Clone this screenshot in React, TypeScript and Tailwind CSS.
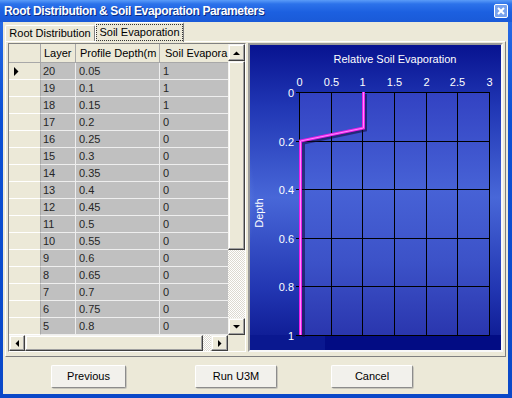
import React from "react";

const rows: [string, string, string][] = [
  ["20", "0.05", "1"], ["19", "0.1", "1"], ["18", "0.15", "1"], ["17", "0.2", "0"],
  ["16", "0.25", "0"], ["15", "0.3", "0"], ["14", "0.35", "0"], ["13", "0.4", "0"],
  ["12", "0.45", "0"], ["11", "0.5", "0"], ["10", "0.55", "0"], ["9", "0.6", "0"],
  ["8", "0.65", "0"], ["7", "0.7", "0"], ["6", "0.75", "0"], ["5", "0.8", "0"],
];

function Arrow({ dir }: { dir: "up" | "down" | "left" | "right" }) {
  const pts =
    dir === "up" ? "0,4 7,4 3.5,0.5" :
    dir === "down" ? "0,0 7,0 3.5,3.5" :
    dir === "left" ? "4,0 4,7 0.5,3.5" : "0,0 0,7 3.5,3.5";
  const w = dir === "up" || dir === "down" ? 7 : 4;
  const h = dir === "up" || dir === "down" ? 4 : 7;
  return (
    <svg width={w} height={h} viewBox={`0 0 ${w} ${h}`}>
      <polygon points={pts} fill="#000" />
    </svg>
  );
}

const btn3d =
  "bg-[#ece9d8] border border-t-[#f4f3ee] border-l-[#f4f3ee] border-r-[#404040] border-b-[#404040] shadow-[inset_-1px_-1px_#a0a0a0,inset_1px_1px_#fff] flex items-center justify-center";

const xs = [299, 330.67, 362.33, 394, 425.67, 457.33, 489];
const ys = [92, 140.6, 189.2, 237.8, 286.4, 335];
const xl = ["0", "0.5", "1", "1.5", "2", "2.5", "3"];
const yl = ["0", "0.2", "0.4", "0.6", "0.8", "1"];

function Chart() {
  return (
    <div className="w-[255px] h-[309px] border-2 border-t-[#9a9a9a] border-l-[#9a9a9a] border-r-[#f8f8f8] border-b-[#f8f8f8] shrink-0">
      <svg width={251} height={305} viewBox="250 45 251 305" className="block">
        <defs>
          <linearGradient id="bg" x1="0" y1="0" x2="0" y2="1">
            <stop offset="0" stopColor="#081390" />
            <stop offset="0.2" stopColor="#2036b4" />
            <stop offset="0.5" stopColor="#4867d8" />
            <stop offset="0.8" stopColor="#2236b2" />
            <stop offset="1" stopColor="#0a168e" />
          </linearGradient>
          <radialGradient id="glow" cx="0" cy="0.5" r="0.5">
            <stop offset="0" stopColor="#8fb2ff" stopOpacity="0.8" />
            <stop offset="1" stopColor="#8fb2ff" stopOpacity="0" />
          </radialGradient>
          <linearGradient id="plot" x1="0" y1="0" x2="0" y2="1">
            <stop offset="0" stopColor="#3242c2" />
            <stop offset="0.4" stopColor="#4762d6" />
            <stop offset="0.7" stopColor="#3c52c8" />
            <stop offset="1" stopColor="#2a36ae" />
          </linearGradient>
        </defs>
        <rect x={250} y={45} width={251} height={305} fill="url(#bg)" />
        <rect x={210} y={100} width={90} height={200} fill="url(#glow)" />
        <rect x={299} y={92} width={190} height={243} fill="url(#plot)" />
        <rect x={250} y={335} width={251} height={15} fill="#020c84" />
        <rect x={250} y={335} width={75} height={15} fill="#0a1890" />
        {xs.map((x, i) => (
          <line key={"v" + i} x1={Math.round(x) + 0.5} y1={92} x2={Math.round(x) + 0.5} y2={335.5} stroke="#000" strokeWidth={1} />
        ))}
        {ys.map((y, i) => (
          <line key={"h" + i} x1={296} y1={Math.round(y) + 0.5} x2={489.5} y2={Math.round(y) + 0.5} stroke="#000" strokeWidth={1} />
        ))}
        <text x={395} y={63} fill="#fff" fontSize={11} textAnchor="middle" fontFamily="Liberation Sans, Arial, sans-serif">
          Relative Soil Evaporation
        </text>
        {xs.map((x, i) => (
          <text key={"xl" + i} x={Math.round(x) + 0.5} y={86} fill="#fff" fontSize={11} textAnchor="middle" fontFamily="Liberation Sans, Arial, sans-serif">
            {xl[i]}
          </text>
        ))}
        {ys.map((y, i) => (
          <text key={"yl" + i} x={294} y={Math.round(y) + 4.5} fill="#fff" fontSize={11} textAnchor="end" fontFamily="Liberation Sans, Arial, sans-serif">
            {yl[i]}
          </text>
        ))}
        <text x={263} y={213} fill="#fff" fontSize={11} textAnchor="middle" fontFamily="Liberation Sans, Arial, sans-serif" transform="rotate(-90 263 213)">
          Depth
        </text>
        <polyline points="365.5,94 365.5,130 303.5,143 303.5,337" fill="none" stroke="#100838" strokeOpacity={0.55} strokeWidth={3} />
        <polyline points="363.5,92 363.5,128 300.5,141 300.5,335" fill="none" stroke="#e81ee8" strokeWidth={3} />
        <polyline points="363.5,92 363.5,128 300.5,141 300.5,335" fill="none" stroke="#ff8cff" strokeWidth={1} />
      </svg>
    </div>
  );
}

function Grid() {
  return (
    <div className="w-[238px] h-[309px] border border-t-[#808080] border-l-[#808080] border-r-[#ffffff] border-b-[#ffffff] flex flex-col shrink-0 bg-[#ece9d8]">
      <div className="flex h-[291px]">
        <div className="w-[219px] flex flex-col overflow-hidden">
          <div className="flex h-[19px] shrink-0 text-black">
            <div className="w-[32px] border-r border-b border-r-[#a8a8a8] border-b-[#a8a8a8] bg-[#ece9d8]" />
            <div className="w-[35px] border-r border-b border-r-[#a8a8a8] border-b-[#a8a8a8] flex items-center pl-[3px] whitespace-nowrap">Layer</div>
            <div className="w-[84px] border-r border-b border-r-[#a8a8a8] border-b-[#a8a8a8] flex items-center pl-[4px] whitespace-nowrap">Profile Depth(m</div>
            <div className="w-[68px] border-b border-b-[#a8a8a8] flex items-center pl-[5px] whitespace-nowrap">Soil Evapora</div>
          </div>
          {rows.map((r, i) => (
            <div key={r[0]} className="flex h-[17px] shrink-0 text-[#262626]">
              <div className="w-[32px] border-r border-b border-r-[#a8a8a8] border-b-[#ffffff] bg-[#ece9d8] flex items-center pl-[5px]">
                {i === 0 && (
                  <svg width={5} height={9} viewBox="0 0 5 9">
                    <polygon points="0,0 0,9 4.5,4.5" fill="#000" />
                  </svg>
                )}
              </div>
              <div className="w-[35px] bg-[#c0c0c0] border-r border-b border-[#eeeeee] flex items-center pl-[2px]">{r[0]}</div>
              <div className="w-[84px] bg-[#c0c0c0] border-r border-b border-[#eeeeee] flex items-center pl-[3px]">{r[1]}</div>
              <div className="w-[68px] bg-[#c0c0c0] border-b border-[#eeeeee] flex items-center pl-[3px]">{r[2]}</div>
            </div>
          ))}
        </div>
        <div className="w-[17px] flex flex-col">
          <div className={`h-[17px] ${btn3d}`}><Arrow dir="up" /></div>
          <div className={`h-[189px] ${btn3d}`} />
          <div className="h-[68px] bg-[repeating-conic-gradient(#ffffff_0_25%,#dcd9d0_0_50%)] bg-[length:2px_2px]" />
          <div className={`h-[17px] ${btn3d}`}><Arrow dir="down" /></div>
        </div>
      </div>
      <div className="flex h-[16px]">
        <div className={`w-[16px] ${btn3d}`}><Arrow dir="left" /></div>
        <div className={`w-[178px] ${btn3d}`} />
        <div className="w-[8px] bg-[repeating-conic-gradient(#ffffff_0_25%,#dcd9d0_0_50%)] bg-[length:2px_2px]" />
        <div className={`w-[17px] ${btn3d}`}><Arrow dir="right" /></div>
        <div className="w-[17px] bg-[#ece9d8]" />
      </div>
    </div>
  );
}

const pushBtn =
  "h-[23px] bg-[#f2f1ec] border border-t-[#ffffff] border-l-[#ffffff] border-r-[#8c8c8c] border-b-[#8c8c8c] shadow-[1px_1px_0_#c8c6bc] rounded-[2px] flex items-center justify-center text-black";

export default function App() {
  return (
    <div className="w-[512px] h-[398px] flex flex-col overflow-hidden bg-[linear-gradient(to_bottom,#2a6ee8,#0c50d4_30%,#0a48c8)] font-['Liberation_Sans',Arial,sans-serif] text-[11px] leading-none">
      <div className="h-[22px] shrink-0 flex items-center pl-[4px] pr-[4px] bg-[linear-gradient(to_bottom,#5a9cf8_0%,#2c72ea_18%,#1c60e0_55%,#1a5ad8_100%)]">
        <span className="text-white font-bold text-[12px] tracking-[-0.35px] [text-shadow:1px_1px_0_#0a2a80]">
          Root Distribution &amp; Soil Evaporation Parameters
        </span>
        <div className="ml-auto w-[14px] h-[14px] rounded-[2px] border border-white bg-[#78a2ee] flex items-center justify-center">
          <svg width={8} height={8} viewBox="0 0 8 8">
            <path d="M1 1 L7 7 M7 1 L1 7" stroke="#fff" strokeWidth={2} />
          </svg>
        </div>
      </div>
      <div className="flex-1 ml-[3px] mr-[4px] mb-[4px] bg-[#ece9d8] flex flex-col">
        <div className="h-[19px] shrink-0 flex items-end pl-[2px]">
          <div className="h-[16px] w-[90px] border-t border-l border-r border-t-white border-l-white border-r-[#808080] rounded-t-[2px] flex items-center justify-center text-black">
            Root Distribution
          </div>
          <div className="h-[20px] w-[89px] -mb-px relative z-10 bg-[#ece9d8] border-t border-l border-r border-t-white border-l-white border-r-[#808080] rounded-t-[2px] flex items-center justify-center text-black">
            <span className="border border-dotted border-[#333] px-[2px] py-[2px]">Soil Evaporation</span>
          </div>
        </div>
        <div className="mx-[2px] h-[316px] shrink-0 border border-t-white border-l-white border-r-[#808080] border-b-[#808080] pl-[2px] pt-[1px] flex gap-[2px]">
          <Grid />
          <Chart />
        </div>
        <div className="mt-[8px] flex">
          <div className={`${pushBtn} ml-[48px] w-[75px]`}>Previous</div>
          <div className={`${pushBtn} ml-[69px] w-[82px]`}>Run U3M</div>
          <div className={`${pushBtn} ml-[54px] w-[82px]`}>Cancel</div>
        </div>
      </div>
    </div>
  );
}
